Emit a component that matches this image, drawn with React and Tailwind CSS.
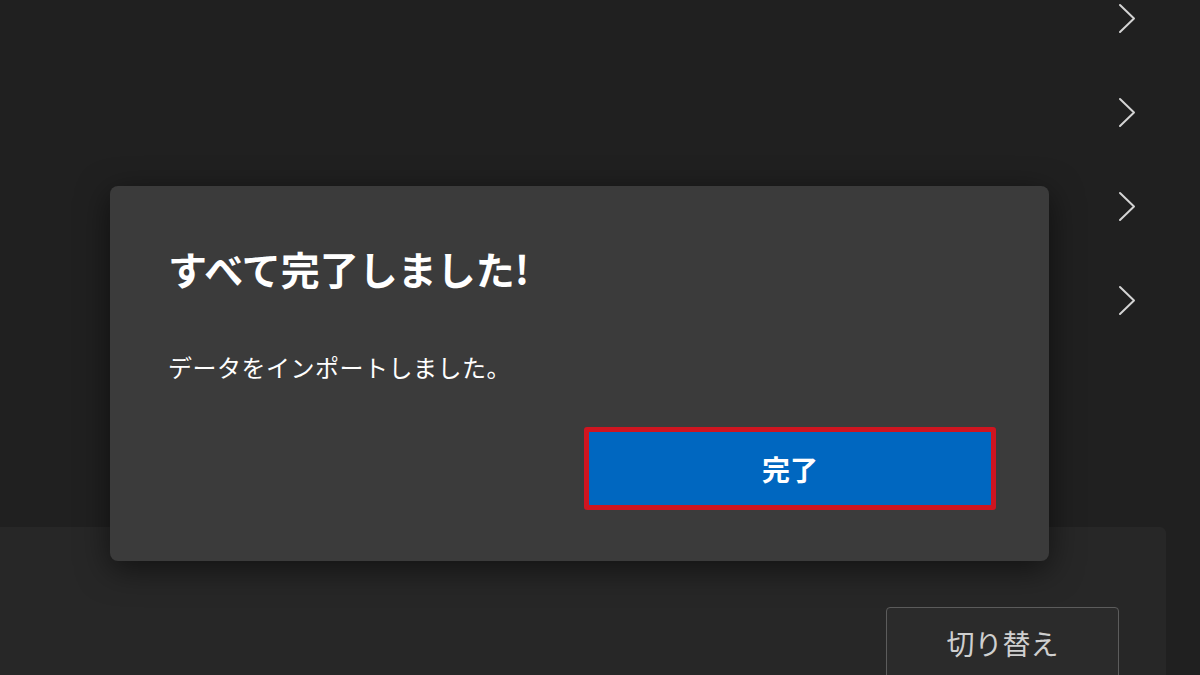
import React from "react";

const font = { fontFamily: '"Noto Sans CJK JP", "Noto Sans", sans-serif' };

const Chevron = () => (
	<svg width="18" height="31" viewBox="0 0 18 31" fill="none">
		<polyline
			points="2,2 16,15.5 2,29"
			stroke="#d4d4d4"
			strokeWidth="2"
			strokeLinecap="round"
			strokeLinejoin="round"
		/>
	</svg>
);

const App = () => {
	const rows = [0, 1, 2, 3];

	return (
		<div
			className="relative w-[1200px] h-[675px] overflow-hidden bg-[#202020]"
			style={font}
		>
			{/* Settings list behind the dialog */}
			<div className="flex flex-col -mt-[29px] w-[1166px]">
				{rows.map((r) => (
					<div key={r} className="h-[94px] flex items-center justify-end pr-[30px]">
						<Chevron />
					</div>
				))}
			</div>

			{/* Bottom card */}
			<div className="mt-[180px] w-[1166px] h-[200px] bg-[#272727] rounded-tr-md pt-[80px] pl-[886px]">
				<button className="w-[233px] h-[80px] bg-[#2b2b2b] border border-[#5c5c5c] rounded-[4px] pb-[8px] text-[28px] text-[#cfcfcf] leading-none">
					切り替え
				</button>
			</div>

			{/* Dialog */}
			<div className="absolute left-[110px] top-[186px] w-[939px] h-[375px] bg-[#3b3b3b] rounded-lg shadow-[0_8px_32px_rgba(0,0,0,0.55)] flex flex-col px-[58px] pt-[59px]">
				<h1 className="text-[39px] leading-[47px] font-bold text-white">
					すべて完了しました!
				</h1>
				<p className="mt-[59px] text-[24px] leading-[32px] tracking-[0.5px] text-white">
					データをインポートしました。
				</p>
				<div className="mt-[44px] flex justify-end">
					<div className="-mr-[5px] w-[412px] h-[83px] border-[5px] border-[#cf1520] rounded-[3px]">
						<button className="w-full h-full bg-[#0067c0] text-white text-[28px] font-bold leading-none">
							完了
						</button>
					</div>
				</div>
			</div>
		</div>
	);
};

export default App;
